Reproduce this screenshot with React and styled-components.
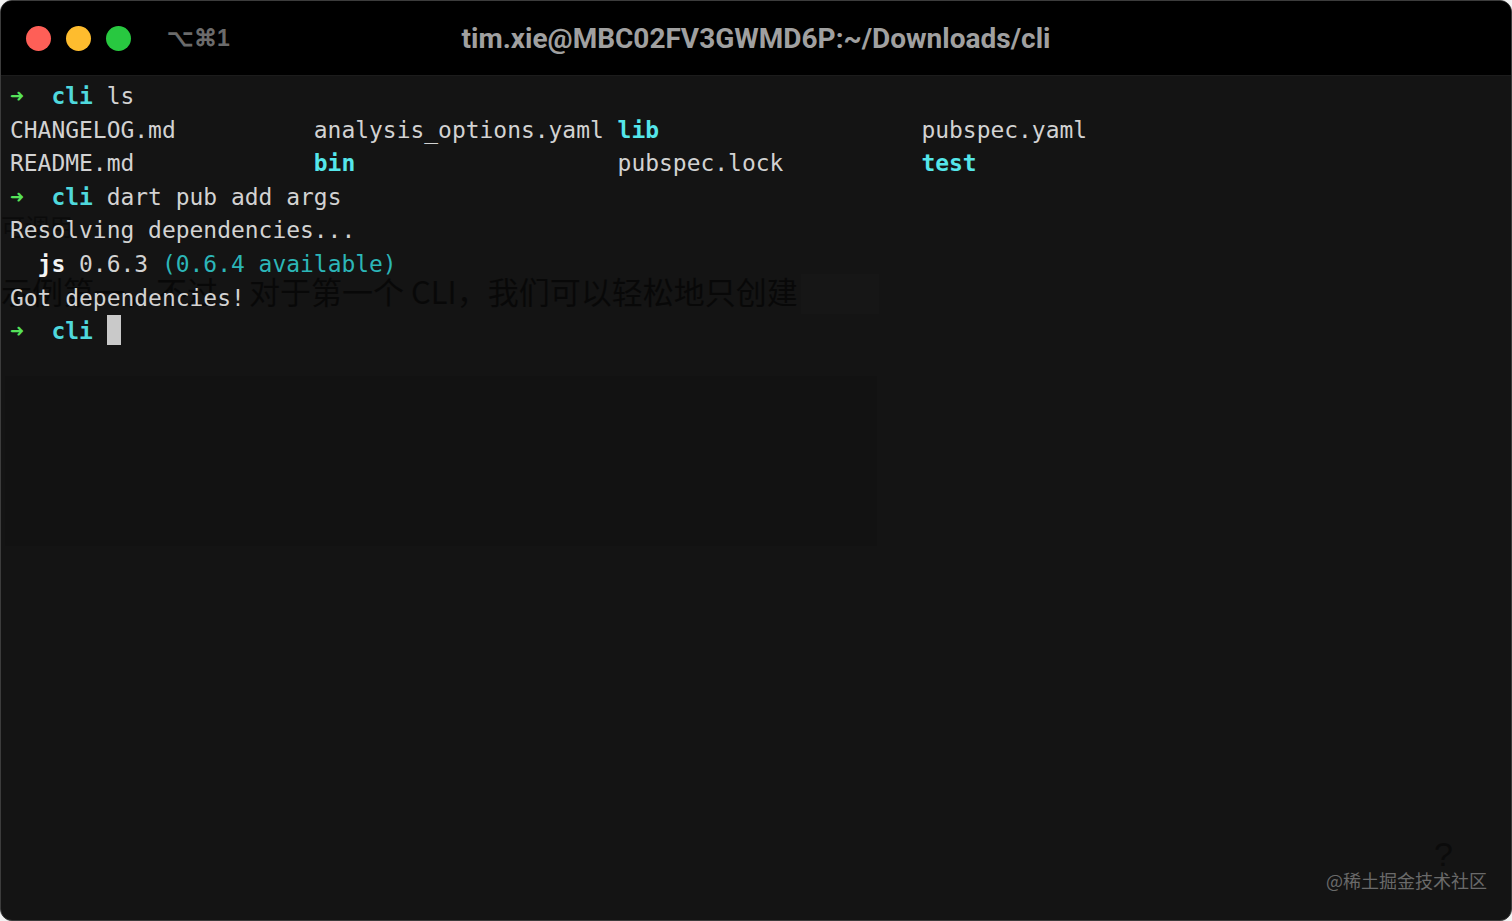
import React from 'react'
import styled, { createGlobalStyle } from 'styled-components'

const Global = createGlobalStyle`
    html, body { margin: 0; padding: 0; background: #f2f2f2; }
    body { width: 1512px; height: 921px; overflow: hidden; }
`

const Window = styled.div`
    box-sizing: border-box;
    width: 1512px;
    height: 921px;
    border: 1px solid #3c3c3c;
    border-radius: 12px;
    overflow: hidden;
    background: #141414;
    display: flex;
    flex-direction: column;
    position: relative;
`

const TitleBar = styled.div`
    height: 74px;
    flex: none;
    background: #000;
    border-bottom: 1px solid #1c1c1c;
    display: flex;
    align-items: center;
    padding-left: 25px;
    position: relative;
`

const Light = styled.span`
    width: 25px;
    height: 25px;
    border-radius: 50%;
    background: ${p => p.color};
    margin-right: 15px;
`

const Shortcut = styled.span`
    margin-left: 21px;
    font-family: "Liberation Sans", Arial, sans-serif;
    font-weight: bold;
    font-size: 23px;
    color: #6b6b6b;
`

const Title = styled.div`
    position: absolute;
    left: 0;
    right: 0;
    top: 0;
    bottom: 0;
    display: flex;
    align-items: center;
    justify-content: center;
    font-family: Roboto, "Liberation Sans", sans-serif;
    font-weight: bold;
    font-size: 28px;
    color: #a0a0a0;
    pointer-events: none;
`

const Screen = styled.div`
    flex: 1;
    padding: 4px 0 0 9px;
    font-family: "DejaVu Sans Mono", "Liberation Mono", monospace;
    font-size: 22.95px;
    line-height: 33.6px;
    color: #d2d2d2;
    position: relative;
`

const Line = styled.div`
    white-space: pre;
    height: 33.6px;
    position: relative;
    z-index: 1;
`

const Grid = styled.div`
    display: grid;
    grid-template-columns: repeat(4, 22ch);
    white-space: pre;
    position: relative;
    z-index: 1;
`

const Arrow = styled.span`
    color: #56e35a;
    font-weight: bold;
`

const Dir = styled.span`
    color: #4fd8dc;
    font-weight: bold;
`

const Folder = styled.span`
    color: #55e6ea;
    font-weight: bold;
`

const Pkg = styled.span`
    color: #f4f4f4;
    font-weight: bold;
`

const Note = styled.span`
    color: #2cb6b8;
`

const Cursor = styled.span`
    display: inline-block;
    width: 14px;
    height: 30px;
    vertical-align: -6px;
    background: #c9c9c9;
`

const Ghost = styled.div`
    position: absolute;
    left: ${p => p.x}px;
    top: ${p => p.y}px;
    font-family: "Noto Sans CJK SC", "Liberation Sans", sans-serif;
    font-size: ${p => p.size || 30}px;
    color: #000;
    opacity: ${p => p.op || 0.55};
    white-space: pre;
    line-height: 1;
    z-index: 0;
`

const GhostChip = styled.div`
    position: absolute;
    left: 800px;
    top: 198px;
    width: 78px;
    height: 40px;
    background: #161616;
    z-index: 0;
`

const GhostBlock = styled.div`
    position: absolute;
    left: 4px;
    top: 300px;
    width: 872px;
    height: 170px;
    background: #121212;
    z-index: 0;
`

const Watermark = styled.div`
    position: absolute;
    right: 24px;
    bottom: 22px;
    font-family: "Noto Sans CJK SC", sans-serif;
    font-size: 18px;
    color: #6a6a6a;
`

const Question = styled.div`
    position: absolute;
    right: 58px;
    bottom: 48px;
    font-family: "Liberation Sans", sans-serif;
    font-size: 34px;
    color: #0b0b0b;
`

const Prompt = ({ children }) => (
    <Line><Arrow>➜</Arrow>  <Dir>cli</Dir>{children}</Line>
)

export default function App() {
    return (
        <>
            <Global />
            <Window>
                <TitleBar>
                    <Light color="#fe5f57" />
                    <Light color="#febc2e" />
                    <Light color="#28c840" />
                    <Shortcut>⌥⌘1</Shortcut>
                    <Title>tim.xie@MBC02FV3GWMD6P:~/Downloads/cli</Title>
                </TitleBar>
                <Screen>
                    <GhostBlock />
                    <GhostChip />
                    <Ghost x={0} y={138} size={24} op={0.4}>可调用</Ghost>
                    <Ghost x={0} y={199} size={31}>示例第一，不过，对于第一个 CLI，我们可以轻松地只创建</Ghost>
                    <Prompt> ls</Prompt>
                    <Grid>
                        <span>CHANGELOG.md</span>
                        <span>analysis_options.yaml</span>
                        <Folder>lib</Folder>
                        <span>pubspec.yaml</span>
                        <span>README.md</span>
                        <Folder>bin</Folder>
                        <span>pubspec.lock</span>
                        <Folder>test</Folder>
                    </Grid>
                    <Prompt> dart pub add args</Prompt>
                    <Line>Resolving dependencies...</Line>
                    <Line>  <Pkg>js</Pkg> 0.6.3 <Note>(0.6.4 available)</Note></Line>
                    <Line>Got dependencies!</Line>
                    <Prompt> <Cursor /></Prompt>
                    <Question>?</Question>
                    <Watermark>@稀土掘金技术社区</Watermark>
                </Screen>
            </Window>
        </>
    )
}
